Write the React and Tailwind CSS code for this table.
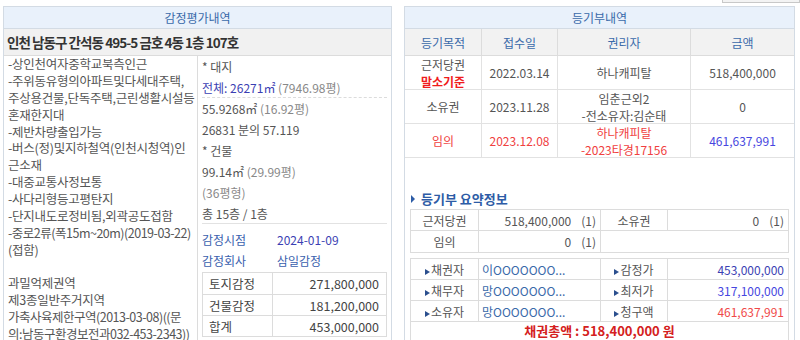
const font = { fontFamily: '"Noto Sans CJK KR", "Noto Sans", sans-serif' };

const landNotes = [
  ['-상인천여자중학교북측인근'],
  ['-주위동유형의아파트및다세대주택,'],
  ['주상용건물,단독주택,근린생활시설등'],
  ['혼재한지대'],
  ['-제반차량출입가능'],
  ['-버스(정)및지하철역(인천시청역)인'],
  ['근소재'],
  ['-대중교통사정보통'],
  ['-사다리형등고평탄지'],
  ['-단지내도로정비됨,외곽공도접함'],
  ['-중로2류(폭15m~20m)(2019-03-22)', true],
  ['(접함)'],
  [''],
  ['과밀억제권역'],
  ['제3종일반주거지역'],
  ['가축사육제한구역(2013-03-08)((문', true],
  ['의:남동구환경보전과032-453-2343))', true],
];

const Tri = () => (
  <span className="inline-block w-0 h-0 border-y-[3px] border-y-transparent border-l-[5px] border-l-[#2b4f8e] mr-[1px] align-middle" />
);

function Panel({ title, className, children }) {
  return (
    <div className={`border border-[#d3dbe4] ${className}`}>
      <div className="h-[22px] leading-[22px] bg-[#e9f1fb] border-b border-[#d3dbe4] text-center text-[12px] text-[#3a6aaa]">
        {title}
      </div>
      {children}
    </div>
  );
}

export default function App() {
  return (
    <div className="w-[800px] h-[340px] overflow-hidden bg-white text-[#555]" style={font}>
      <div className="h-[6px] flex justify-end">
        <div className="w-[78px] h-[3px] border border-t-0 border-[#c8c8c8] bg-[#f3f3f3]" />
      </div>
      <div className="flex items-start">
        {/* 감정평가내역 */}
        <Panel title="감정평가내역" className="ml-[3px] w-[389px] h-[400px]">
          <div className="h-[27px] leading-[27px] bg-[#f1f1f1] border-b border-[#dcdcdc] px-[3px] text-[13.5px] font-bold text-[#333] tracking-[-0.07em]">
            인천 남동구 간석동 495-5 금호 4동 1층 107호
          </div>
          <div className="flex">
            <div className="w-[194px] shrink-0 border-r border-[#dcdcdc] pl-[4px] text-[12.5px] leading-[16.88px]">
              {landNotes.map(([l, tight], i) => (
                <div
                  key={i}
                  className={`h-[16.88px] whitespace-nowrap ${tight ? 'tracking-[-0.04em]' : 'tracking-[-0.02em]'}`}
                >
                  {l}
                </div>
              ))}
            </div>
            <div className="flex-1 px-[4px] text-[12px] leading-[21px]">
              <div className="h-[21px]">* 대지</div>
              <div className="h-[21px] border-b border-dashed border-[#dcdcdc]">
                <span className="text-[#3b3fb3]">전체: 26271㎡</span>
                <span className="text-[#888]"> (7946.98평)</span>
              </div>
              <div className="h-[21px]">55.9268㎡ <span className="text-[#888]">(16.92평)</span></div>
              <div className="h-[21px]">26831 분의 57.119</div>
              <div className="h-[21px]">* 건물</div>
              <div className="h-[21px]">99.14㎡ <span className="text-[#888]">(29.99평)</span></div>
              <div className="h-[21px] text-[#888]">(36평형)</div>
              <div className="h-[21px] border-b border-[#e2e2e2]">총 15층 / 1층</div>
              <div className="mt-[5px] h-[21px] flex">
                <span className="w-[75px] text-[#3a5fae]">감정시점</span>
                <span className="text-[#3b3fb3]">2024-01-09</span>
              </div>
              <div className="h-[21px] flex">
                <span className="w-[75px] text-[#3a5fae]">감정회사</span>
                <span className="text-[#3a5fae]">삼일감정</span>
              </div>
              <div className="mt-[1px] border border-[#dcdcdc] text-[#444] text-[12.5px]">
                {[
                  ['토지감정', '271,800,000'],
                  ['건물감정', '181,200,000'],
                  ['합계', '453,000,000'],
                ].map(([k, v], i) => (
                  <div key={k} className={`flex h-[21px] ${i ? 'border-t border-[#dcdcdc]' : ''}`}>
                    <div className="w-[70px] border-r border-[#dcdcdc] px-[6px]">{k}</div>
                    <div className="flex-1 text-right pr-[7px]">{v}</div>
                  </div>
                ))}
              </div>
            </div>
          </div>
        </Panel>

        {/* 등기부내역 */}
        <Panel title="등기부내역" className="ml-[12px] w-[391px] h-[400px]">
          <div className="text-[12px] text-center">
            <div className="flex h-[27px] leading-[27px] bg-[#f2f2f2] border-b border-[#dcdcdc] text-[#3a6aaa]">
              <div className="w-[77px] border-r border-[#dcdcdc]">등기목적</div>
              <div className="w-[76px] border-r border-[#dcdcdc]">접수일</div>
              <div className="w-[133px] border-r border-[#dcdcdc]">권리자</div>
              <div className="flex-1">금액</div>
            </div>
            <div className="flex h-[34px] leading-[17px] border-b border-[#e2e2e2]">
              <div className="w-[77px] border-r border-[#e2e2e2] flex flex-col justify-center">
                <div>근저당권</div>
                <div className="text-[#f01c1c] font-bold">말소기준</div>
              </div>
              <div className="w-[76px] border-r border-[#e2e2e2] flex items-center justify-center">2022.03.14</div>
              <div className="w-[133px] border-r border-[#e2e2e2] flex items-center justify-center">하나캐피탈</div>
              <div className="flex-1 flex items-center justify-center">518,400,000</div>
            </div>
            <div className="flex h-[34px] leading-[17px] border-b border-[#e2e2e2]">
              <div className="w-[77px] border-r border-[#e2e2e2] flex items-center justify-center">소유권</div>
              <div className="w-[76px] border-r border-[#e2e2e2] flex items-center justify-center">2023.11.28</div>
              <div className="w-[133px] border-r border-[#e2e2e2] flex flex-col justify-center">
                <div>임춘근외2</div>
                <div>-전소유자:김순태</div>
              </div>
              <div className="flex-1 flex items-center justify-center">0</div>
            </div>
            <div className="flex h-[34px] leading-[17px] border-b border-[#e2e2e2] text-[#f04040]">
              <div className="w-[77px] border-r border-[#e2e2e2] flex items-center justify-center">임의</div>
              <div className="w-[76px] border-r border-[#e2e2e2] flex items-center justify-center">2023.12.08</div>
              <div className="w-[133px] border-r border-[#e2e2e2] flex flex-col justify-center">
                <div>하나캐피탈</div>
                <div>-2023타경17156</div>
              </div>
              <div className="flex-1 flex items-center justify-center text-[#4646e0]">461,637,991</div>
            </div>
          </div>

          <div className="px-[5px] text-[12px]">
            <div className="mt-[32px] h-[18px] leading-[18px] flex items-center text-[13px] font-bold text-[#2d5ca6]">
              <span className="inline-block w-0 h-0 border-y-[4px] border-y-transparent border-l-[4px] border-l-[#2d5ca6] ml-[1px] mr-[6px]" />
              등기부 요약정보
            </div>
            <div className="mt-[1px] border border-[#dcdcdc] text-[#555]">
              <div className="flex h-[21px] leading-[21px] border-b border-[#dcdcdc]">
                <div className="w-[68px] border-r border-[#dcdcdc] text-center">근저당권</div>
                <div className="w-[122px] border-r border-[#dcdcdc] text-right pr-[4px]">518,400,000<span className="ml-[10px]">(1)</span></div>
                <div className="w-[67px] border-r border-[#dcdcdc] text-center">소유권</div>
                <div className="flex-1 text-right pr-[4px]">0<span className="ml-[10px]">(1)</span></div>
              </div>
              <div className="flex h-[21px] leading-[21px]">
                <div className="w-[68px] border-r border-[#dcdcdc] text-center">임의</div>
                <div className="w-[122px] border-r border-[#dcdcdc] text-right pr-[4px]">0<span className="ml-[10px]">(1)</span></div>
                <div className="flex-1" />
              </div>
            </div>
            <div className="mt-[5px] border border-[#dcdcdc] text-[#555]">
              {[
                ['채권자', '이OOOOOOO...', '감정가', '453,000,000', 'text-[#3b3fb3]'],
                ['채무자', '망OOOOOOO...', '최저가', '317,100,000', 'text-[#4646e0]'],
                ['소유자', '망OOOOOOO...', '청구액', '461,637,991', 'text-[#f04848]'],
              ].map(([a, b, c, d, col]) => (
                <div key={a} className="flex h-[21px] leading-[21px] border-b border-[#dcdcdc]">
                  <div className="w-[68px] border-r border-[#dcdcdc] text-center"><Tri />{a}</div>
                  <div className="w-[122px] border-r border-[#dcdcdc] pl-[3px] text-[#3a6aaa]">{b}</div>
                  <div className="w-[67px] border-r border-[#dcdcdc] text-center"><Tri />{c}</div>
                  <div className={`flex-1 text-right pr-[4px] ${col}`}>{d}</div>
                </div>
              ))}
              <div className="h-[18px] leading-[18px] text-center text-[13px] font-bold text-[#d42020]">
                채권총액 : 518,400,000 원
              </div>
            </div>
          </div>
        </Panel>
      </div>
    </div>
  );
}
